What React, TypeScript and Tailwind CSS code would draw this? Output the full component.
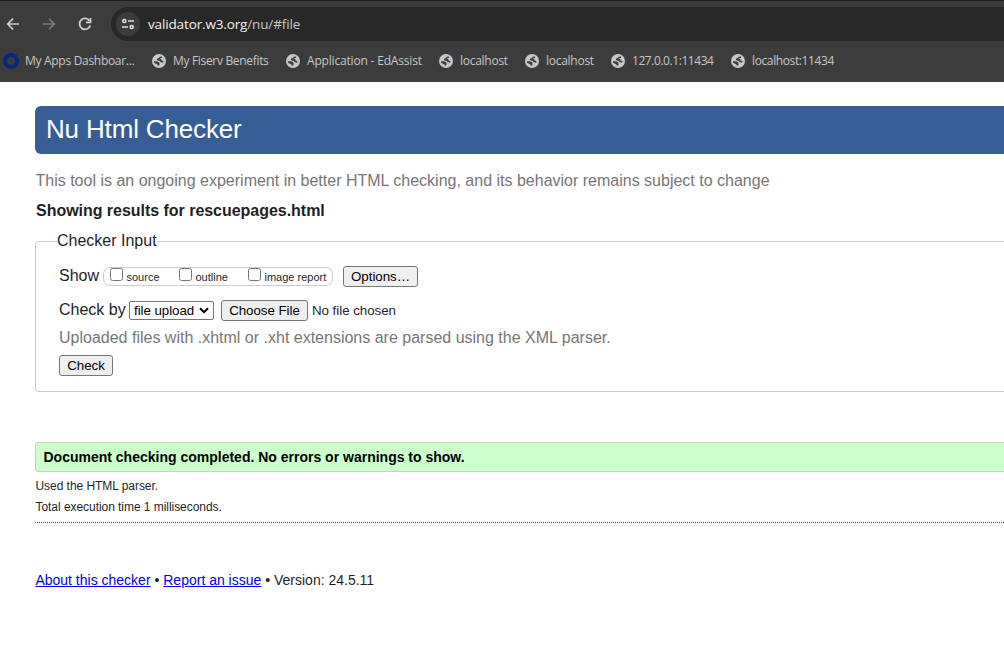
import type { ReactNode } from "react";

function Globe() {
  return (
    <svg width="14" height="14" viewBox="0 0 14 14" className="shrink-0">
      <circle cx="7" cy="7" r="7" fill="#c4c7cb" />
      <path
        d="M10 2.4 7.6 2.8 7.2 3.9 5.2 4.4 4.9 5.8 6 6.8H7.6L8.6 8.3H10.4L11 9.2 11.6 7.6 9.6 6.2 9 5 7.4 5.2 8.8 4.2 10.2 3.8ZM2 7.2H5L7 8.2 7.6 9.6 7.4 10.9 6 12.1 5.4 10.6 3.8 9.4 2.2 9Z"
        fill="#3c3c3c"
      />
    </svg>
  );
}

function Bookmark({ label, className }: { label: string; className: string }) {
  return (
    <div className="flex h-5 shrink-0 items-center">
      <Globe />
      <span className={`ml-[7px] shrink-0 whitespace-nowrap ${className}`}>{label}</span>
    </div>
  );
}

function BrowserBar() {
  return (
    <header className="h-[82px] overflow-hidden border-t border-[#202020] bg-[#3c3c3c] font-['Open_Sans','Noto_Sans',sans-serif]">
      <div className="mt-[6px] flex h-[34px] items-center">
        <svg width="111" height="34" viewBox="0 0 111 34" fill="none" className="shrink-0">
          <path d="M19 17H8M13 11.7 7.7 17 13 22.3" stroke="#d0d0d0" strokeWidth="1.7" />
          <path d="M43 17H54M49 11.7 54.3 17 49 22.3" stroke="#7b7b7b" strokeWidth="1.7" />
          <path d="M89.6 13.8A5.5 5.5 0 1 0 90.3 18.5" stroke="#d0d0d0" strokeWidth="1.8" />
          <path d="M90.5 11V15.4H86" stroke="#d0d0d0" strokeWidth="1.7" />
        </svg>
        <div className="flex h-[34px] flex-1 items-center rounded-l-full bg-[#282828] pl-[5px]">
          <div className="flex size-6 items-center justify-center rounded-full bg-[#3c3c3c]">
            <svg width="14" height="14" viewBox="0 0 14 14" fill="none" stroke="#dedede" strokeWidth="1.5">
              <circle cx="3.3" cy="4" r="1.6" />
              <path d="M7 4H13M1 10H7" />
              <circle cx="10.7" cy="10" r="1.6" />
            </svg>
          </div>
          <span className="ml-2 w-[152px] whitespace-nowrap text-[13.5px] tracking-[-0.14px] text-[#c7c7c7]">
            <span className="text-[#f1f1f1]">validator.w3.org</span>/nu/#file
          </span>
        </div>
      </div>
      <nav className="mt-[10px] flex h-5 items-center pl-[3px] text-[12px] text-[#c7c7c7]">
        <div className="mr-[17px] flex items-center">
          <span className="size-4 shrink-0 rounded-full border-4 border-[#002a80]" />
          <span className="ml-[6px] w-[110px] whitespace-nowrap tracking-[-0.3px]">My Apps Dashboar...</span>
        </div>
        <Bookmark label="My Fiserv Benefits" className="w-[113px] tracking-[-0.32px]" />
        <Bookmark label="Application - EdAssist" className="w-[132px] tracking-[-0.18px]" />
        <Bookmark label="localhost" className="w-[65px] tracking-[-0.27px]" />
        <Bookmark label="localhost" className="w-[65px] tracking-[-0.27px]" />
        <Bookmark label="127.0.0.1:11434" className="w-[99px] tracking-[-0.44px]" />
        <Bookmark label="localhost:11434" className="w-[99px] tracking-[-0.38px]" />
      </nav>
    </header>
  );
}

function Button({ children, className }: { children: ReactNode; className: string }) {
  return (
    <button
      className={`flex h-[21px] items-center justify-center whitespace-nowrap rounded-[3px] border border-[#767676] bg-[#efefef] text-[13.333px] leading-none tracking-[-0.04px] text-black ${className}`}
    >
      {children}
    </button>
  );
}

function Option({ label, className }: { label: string; className: string }) {
  return (
    <label className={`flex shrink-0 ${className}`}>
      <input
        type="checkbox"
        className="size-[13px] shrink-0 appearance-none rounded-[2.5px] border border-[#767676] bg-white"
      />
      <span className="ml-[3.5px] mt-[2px] whitespace-nowrap text-[11px] leading-[14px]">{label}</span>
    </label>
  );
}

export default function App() {
  return (
    <div className="h-[664px] w-full overflow-hidden bg-white font-['Liberation_Sans',Arial,sans-serif] text-[#1f1f1f]">
      <BrowserBar />
      <main className="pl-[35px] pt-6">
        <h1 className="h-12 rounded-l-[6px] bg-[#365d95] pl-[11px] text-[26px] leading-[46px] tracking-[-0.16px] text-white">
          Nu Html Checker
        </h1>
        <p className="ml-[0.5px] mt-[17px] text-base leading-5 text-[#767676]">
          This tool is an ongoing experiment in better HTML checking, and its behavior remains subject to change
        </p>
        <h2 className="ml-px mt-[10px] text-base font-bold leading-5 tracking-[-0.03px]">
          Showing results for rescuepages.html
        </h2>
        <fieldset className="mt-[10px] h-[161px] rounded-l-[4px] border border-r-0 border-[#ccc] pl-[21px]">
          <legend className="h-[20px] text-base leading-5">Checker Input</legend>
          <div className="ml-[2px] mt-[15px] flex h-[21px]">
            <span className="w-[44px] text-base leading-[19px]">Show</span>
            <div className="mt-px flex h-[19px] w-[230px] rounded-[7px] border border-[#ccc] pl-[6px]">
              <Option label="source" className="w-[69px]" />
              <Option label="outline" className="w-[69px]" />
              <Option label="image report" className="" />
            </div>
            <Button className="ml-[10px] w-[75px]">Options…</Button>
          </div>
          <div className="ml-[2px] mt-[13px] flex h-[21px]">
            <span className="w-[70px] whitespace-nowrap text-base leading-[19px]">Check by</span>
            <div className="mt-px flex h-[19px] w-[85px] items-center rounded-[2px] border border-[#767676] bg-white pl-1 text-[13.333px] text-black">
              <span className="w-[65px] whitespace-nowrap tracking-[-0.06px]">file upload</span>
              <svg width="10" height="7" viewBox="0 0 10 7" fill="none">
                <path d="M1 1.2 5 5.2 9 1.2" stroke="#000" strokeWidth="2" />
              </svg>
            </div>
            <Button className="ml-[7px] w-[87px]">Choose File</Button>
            <span className="ml-1 text-[13.333px] leading-[21px] tracking-[-0.04px]">No file chosen</span>
          </div>
          <p className="ml-[2px] mt-[7px] text-base leading-5 text-[#767676]">
            Uploaded files with .xhtml or .xht extensions are parsed using the XML parser.
          </p>
          <Button className="ml-[2px] mt-[7px] w-[54px]">Check</Button>
        </fieldset>
        <p className="mt-[50px] h-[30px] rounded-l-[4px] border border-r-0 border-[#ccc] bg-[#ccffcc] pl-[7.5px] text-[14px] font-bold leading-[28px] text-black">
          Document checking completed. No errors or warnings to show.
        </p>
        <div className="border-b border-dotted border-[#555] pb-[4px] pl-[0.5px] pt-[4px] text-[12px] leading-[21px] tracking-[-0.05px]">
          <p>Used the HTML parser.</p>
          <p>Total execution time 1 milliseconds.</p>
        </div>
        <footer className="mt-[47px] whitespace-nowrap pl-[0.4px] text-[14px] leading-5">
          <a href="#about" className="text-[#0000ee] underline">About this checker</a> •{" "}
          <a href="#issue" className="text-[#0000ee] underline">Report an issue</a> • Version: 24.5.11
        </footer>
      </main>
    </div>
  );
}
